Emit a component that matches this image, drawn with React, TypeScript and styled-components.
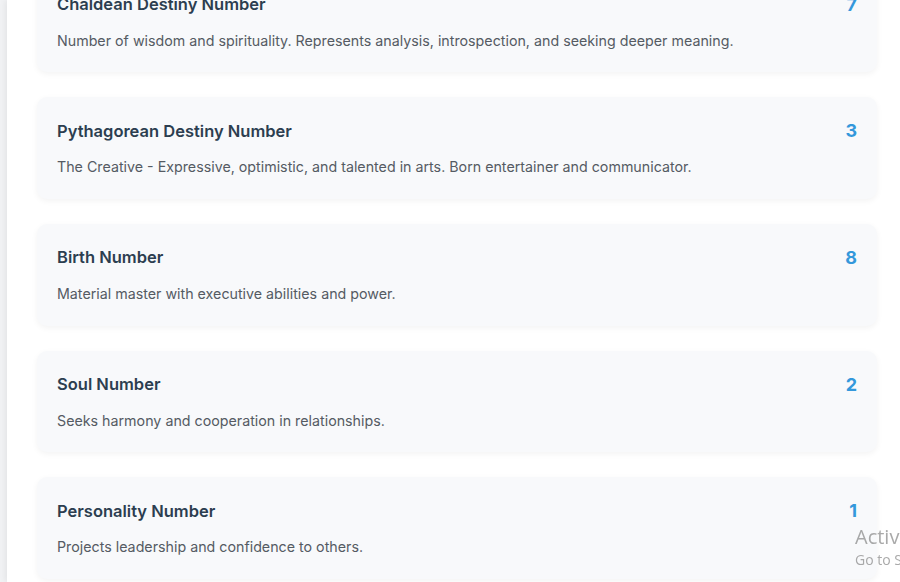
import React from "react";
import styled, { createGlobalStyle } from "styled-components";

const Global = createGlobalStyle`
  html, body { margin: 0; padding: 0; }
  body {
    background: #f1f2f4;
    font-family: Inter, "Noto Sans", sans-serif;
    overflow: hidden;
  }
`;

const Page = styled.div`
  margin-left: 7px;
  min-height: 582px;
  background: #ffffff;
  box-shadow: -2px 0 6px rgba(0, 0, 0, 0.06);
  padding: 0 23px 0 30px;
  overflow: hidden;
`;

const List = styled.div`
  display: flex;
  flex-direction: column;
  gap: 25px;
  margin-top: -29.5px;
`;

const Card = styled.div`
  background: #f8f9fb;
  border-radius: 10px;
  padding: 20px;
  box-shadow: 0 2px 6px rgba(0, 0, 0, 0.05);
  display: flex;
  flex-direction: column;
  gap: 11px;
`;

const Header = styled.div`
  display: flex;
  justify-content: space-between;
  align-items: center;
  height: 27px;
`;

const Title = styled.h3`
  margin: 0;
  font-size: 16.5px;
  font-weight: 600;
  color: #2c3e50;
`;

const Value = styled.span`
  font-size: 18px;
  font-weight: 700;
  color: #3498db;
`;

const Desc = styled.p`
  margin: 0;
  font-size: 14.25px;
  line-height: 23.67px;
  color: #555b63;
`;

const Watermark = styled.div`
  position: fixed;
  left: 855px;
  top: 524px;
  font-family: "Segoe UI", "Open Sans", "Noto Sans", sans-serif;
  color: rgba(140, 140, 140, 0.75);
  white-space: nowrap;
  pointer-events: none;
`;

const WmTitle = styled.div`
  font-size: 20px;
  line-height: 26px;
`;

const WmSub = styled.div`
  font-size: 14px;
  line-height: 20px;
`;

const items = [
  {
    title: "Chaldean Destiny Number",
    value: "7",
    desc: "Number of wisdom and spirituality. Represents analysis, introspection, and seeking deeper meaning.",
  },
  {
    title: "Pythagorean Destiny Number",
    value: "3",
    desc: "The Creative - Expressive, optimistic, and talented in arts. Born entertainer and communicator.",
  },
  { title: "Birth Number", value: "8", desc: "Material master with executive abilities and power." },
  { title: "Soul Number", value: "2", desc: "Seeks harmony and cooperation in relationships." },
  { title: "Personality Number", value: "1", desc: "Projects leadership and confidence to others." },
];

export default function App() {
  return (
    <>
      <Global />
      <Page>
        <List>
          {items.map((it) => (
            <Card key={it.title}>
              <Header>
                <Title>{it.title}</Title>
                <Value>{it.value}</Value>
              </Header>
              <Desc>{it.desc}</Desc>
            </Card>
          ))}
        </List>
      </Page>
      <Watermark>
        <WmTitle>Activate Windows</WmTitle>
        <WmSub>Go to Settings to activate Windows.</WmSub>
      </Watermark>
    </>
  );
}
